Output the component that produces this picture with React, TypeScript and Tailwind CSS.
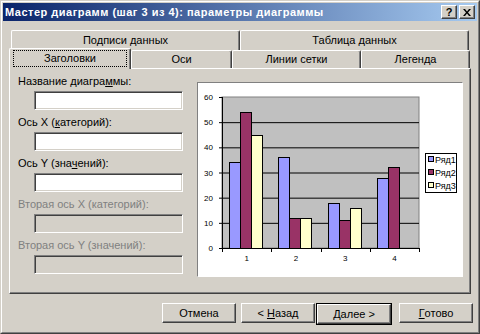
import React from "react";

const raised =
  "border-t border-l border-t-white border-l-white border-r border-b border-r-[#404040] border-b-[#404040] shadow-[inset_-1px_-1px_0_#808080]";

const sunken =
  "border-t border-l border-t-[#808080] border-l-[#808080] border-r border-b border-r-white border-b-white shadow-[inset_1px_1px_0_#404040,inset_-1px_-1px_0_#d4d0c8]";

const data = [
  [34, 54, 45],
  [36, 12, 12],
  [18, 11, 16],
  [28, 32, 0],
];
const colors = ["#9999ff", "#993366", "#ffffcc"];

// plot geometry, local to the chart box
const PX = 24;
const PY = 14;
const PW = 197;
const PH = 151;
const unit = PH / 60;
const cat = PW / 4;

const Chart = () => {
  const y = (v: number) => PY + PH - v * unit;
  return (
    <svg width="264" height="193" className="block">
      <rect x={PX} y={PY} width={PW} height={PH} fill="#c0c0c0" stroke="#808080" />
      {[10, 20, 30, 40, 50].map((v) => (
        <line key={v} x1={PX} x2={PX + PW} y1={y(v) + 0.5} y2={y(v) + 0.5} stroke="#000" />
      ))}
      {[0, 10, 20, 30, 40, 50, 60].map((v) => (
        <g key={v}>
          <line x1={PX - 3} x2={PX} y1={y(v) + 0.5} y2={y(v) + 0.5} stroke="#000" />
          <text x={15} y={y(v) + 3} fontSize="8" textAnchor="end" fontFamily="Liberation Sans, sans-serif">
            {v}
          </text>
        </g>
      ))}
      {data.map((vals, i) =>
        vals.map((v, j) =>
          v > 0 ? (
            <rect
              key={`${i}-${j}`}
              x={Math.round(PX + i * cat + 7 + j * 11) + 0.5}
              y={Math.round(y(v)) + 0.5}
              width={11}
              height={Math.round(PY + PH) - Math.round(y(v))}
              fill={colors[j]}
              stroke="#000"
            />
          ) : null
        )
      )}
      <line x1={PX + 0.5} x2={PX + 0.5} y1={PY} y2={PY + PH} stroke="#000" />
      <line x1={PX} x2={PX + PW} y1={PY + PH + 0.5} y2={PY + PH + 0.5} stroke="#000" />
      {[0, 1, 2, 3, 4].map((i) => (
        <line
          key={i}
          x1={Math.round(PX + i * cat) + 0.5}
          x2={Math.round(PX + i * cat) + 0.5}
          y1={PY + PH}
          y2={PY + PH + 4}
          stroke="#000"
        />
      ))}
      {[1, 2, 3, 4].map((n, i) => (
        <text
          key={n}
          x={PX + i * cat + cat / 2}
          y={178}
          fontSize="8"
          textAnchor="middle"
          fontFamily="Liberation Sans, sans-serif"
        >
          {n}
        </text>
      ))}
      <rect x={227.5} y={70.5} width={31} height={39} fill="#fff" stroke="#000" />
      {["Ряд1", "Ряд2", "Ряд3"].map((s, i) => (
        <g key={s}>
          <rect x={230.5} y={73.5 + i * 13} width={5} height={5} fill={colors[i]} stroke="#000" />
          <text x={237} y={80 + i * 13} fontSize="9" fontFamily="Liberation Sans, sans-serif">
            {s}
          </text>
        </g>
      ))}
    </svg>
  );
};

const Field = ({
  label,
  disabled,
  first,
}: {
  label: React.ReactNode;
  disabled?: boolean;
  first?: boolean;
}) => (
  <div className={first ? "" : "mt-[6px]"}>
    <div className={`h-[13px] leading-[13px] ${disabled ? "text-[#808080]" : "text-black"}`}>{label}</div>
    <div className={`mt-[3px] ml-[16px] w-[149px] h-[19px] ${sunken} ${disabled ? "bg-[#d4d0c8]" : "bg-white"}`} />
  </div>
);

const Button = ({ children, className = "" }: { children: React.ReactNode; className?: string }) => (
  <div className={`w-[74px] h-[20px] bg-[#d4d0c8] flex items-center justify-center ${raised} ${className}`}>
    {children}
  </div>
);

export default function App() {
  return (
    <div className="w-[480px] h-[334px] bg-[#d4d0c8] border border-t-[#d4d0c8] border-l-[#d4d0c8] border-r-[#404040] border-b-[#404040] font-['Liberation_Sans',sans-serif] text-[11px] text-black">
      <div className="h-full border border-t-white border-l-white border-r-[#808080] border-b-[#808080] p-px flex flex-col">
        {/* Title bar */}
        <div className="h-[18px] bg-[linear-gradient(to_right,#0a246a,#a6caf0)] flex items-center pl-[2px] pr-[2px]">
          <span className="text-white font-bold text-[11px] tracking-[0.5px] whitespace-nowrap">
            Мастер диаграмм (шаг 3 из 4): параметры диаграммы
          </span>
          <div className="ml-auto flex gap-[2px]">
            <div className={`w-[16px] h-[14px] bg-[#d4d0c8] flex items-center justify-center font-bold text-[11px] leading-none ${raised}`}>
              ?
            </div>
            <div className={`w-[16px] h-[14px] bg-[#d4d0c8] flex items-center justify-center ${raised}`}>
              <svg width="8" height="7" viewBox="0 0 8 7">
                <path d="M0 0h2l2 2.5L6 0h2L5 3.5 8 7H6L4 4.5 2 7H0l3-3.5z" fill="#000" />
              </svg>
            </div>
          </div>
        </div>

        {/* Tabs, back row */}
        <div className="flex ml-[8px] mt-[9px] h-[20px]">
          {["Подписи данных", "Таблица данных"].map((t) => (
            <div
              key={t}
              className="w-[229px] h-[20px] border-t border-l border-t-white border-l-white border-r border-r-[#404040] shadow-[inset_-1px_0_0_#808080] rounded-t-[2px] flex items-center justify-center"
            >
              {t}
            </div>
          ))}
        </div>

        {/* Tabs, front row */}
        <div className="flex ml-[6px] h-[18px]">
          <div className="relative z-10 -mt-[2px] w-[122px] h-[21px] bg-[#d4d0c8] border-t border-l border-t-white border-l-white border-r border-r-[#404040] shadow-[inset_-1px_0_0_#808080] rounded-t-[2px]">
            <div className="mt-[1px] ml-[3px] w-[114px] h-[17px] border border-dotted border-black flex items-center justify-center">
              Заголовки
            </div>
          </div>
          {[
            ["Оси", "w-[101px]"],
            ["Линии сетки", "w-[129px]"],
            ["Легенда", "w-[109px]"],
          ].map(([t, w]) => (
            <div
              key={t}
              className={`${w} h-[18px] border-t border-l border-t-white border-l-white border-r border-r-[#404040] shadow-[inset_-1px_0_0_#808080] rounded-t-[2px] flex items-center justify-center`}
            >
              {t}
            </div>
          ))}
        </div>

        {/* Tab panel */}
        <div className={`ml-[6px] w-[462px] h-[226px] ${raised} flex`}>
          <div className="w-[187px] pl-[8px] pt-[6px]">
            <Field
              first
              label={
                <>
                  Название диагра<span className="underline">м</span>мы:
                </>
              }
            />
            <Field
              label={
                <>
                  Ось X (<span className="underline">к</span>атегорий):
                </>
              }
            />
            <Field
              label={
                <>
                  Ось Y (зна<span className="underline">ч</span>ений):
                </>
              }
            />
            <Field disabled label="Вторая ось X (категорий):" />
            <Field disabled label="Вторая ось Y (значений):" />
          </div>
          <div className="mt-[13px] w-[266px] h-[195px] bg-white border border-t-[#808080] border-l-[#808080] border-r-white border-b-white">
            <Chart />
          </div>
        </div>

        {/* Buttons */}
        <div className="flex ml-[159px] mt-[9px]">
          <Button>Отмена</Button>
          <Button className="ml-[5px]">
            &lt; <span className="underline ml-[3px]">Н</span>азад
          </Button>
          <div className="ml-[1px] border border-black">
            <Button className="w-[72px] h-[18px]">
              <span className="underline">Д</span>алее &gt;
            </Button>
          </div>
          <Button className="ml-[7px]">
            <span className="underline">Г</span>отово
          </Button>
        </div>
      </div>
    </div>
  );
}
